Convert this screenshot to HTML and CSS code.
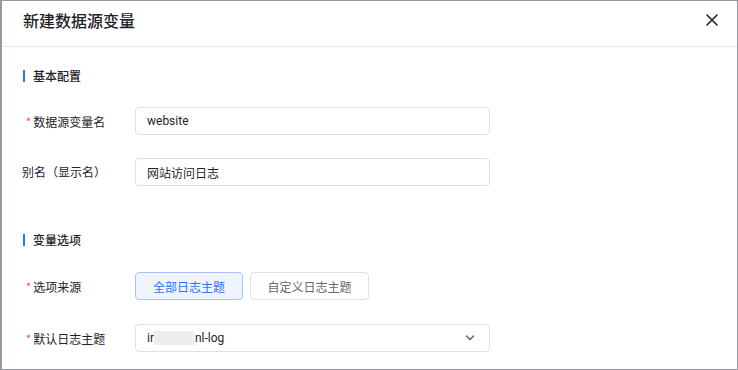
FILE: index.html
```html
<!DOCTYPE html>
<html lang="zh-CN">
<head>
    <meta charset="UTF-8">
    <title>新建数据源变量</title>
    <link rel="stylesheet" href="styles.css">
</head>
<body>
    <div class="dialog">
        <div class="dialog-header">
            <h1>新建数据源变量</h1>
            <span class="close">
                <svg width="14" height="14" viewBox="0 0 14 14"><path d="M2 2L12 12M12 2L2 12" stroke="#1f2329" stroke-width="1.6" stroke-linecap="round"/></svg>
            </span>
        </div>
        <div class="dialog-body">
            <div class="section-title">基本配置</div>
            <div class="form-row first">
                <label class="required">数据源变量名</label>
                <div class="input">website</div>
            </div>
            <div class="form-row">
                <label>别名（显示名）</label>
                <div class="input">网站访问日志</div>
            </div>

            <div class="section-title second">变量选项</div>
            <div class="form-row options">
                <label class="required">选项来源</label>
                <div class="btn-group">
                    <span class="btn active">全部日志主题</span>
                    <span class="btn">自定义日志主题</span>
                </div>
            </div>
            <div class="form-row wide">
                <label class="required">默认日志主题</label>
                <div class="input select">
                    <span>ir<span class="masked"></span>nl-log</span>
                    <svg width="10" height="6" viewBox="0 0 10 6"><path d="M1.5 1L5 4.5L8.5 1" fill="none" stroke="#646a73" stroke-width="1.6" stroke-linecap="round" stroke-linejoin="round"/></svg>
                </div>
            </div>
        </div>
    </div>
</body>
</html>
```

FILE: styles.css
```css
* {
    box-sizing: border-box;
}
body {
    margin: 0;
    font-family: "Noto Sans CJK SC", "Noto Sans", sans-serif;
    color: #1f2329;
    background: #fff;
}
.dialog {
    width: 738px;
    height: 370px;
    border: 1px solid #959aa2;
    border-left-width: 2px;
    background: #fff;
    overflow: hidden;
}
.dialog-header {
    height: 46px;
    padding: 0 18px 0 21px;
    display: flex;
    align-items: center;
    justify-content: space-between;
    border-bottom: 1px solid #e4e6eb;
}
.dialog-header h1 {
    margin: 0;
    font-size: 16px;
    font-weight: 500;
    line-height: 22px;
    margin-top: -7px;
}
.close {
    display: flex;
    margin-top: -7px;
}
.dialog-body {
    padding: 20px 20px 0 20px;
}
.section-title {
    position: relative;
    padding-left: 11px;
    font-size: 12px;
    font-weight: 500;
    line-height: 18px;
}
.section-title::before {
    content: "";
    position: absolute;
    left: 1px;
    top: 3px;
    width: 2px;
    height: 12px;
    background: #3370ff;
}
.section-title.second {
    margin-top: 45px;
}
.form-row {
    display: flex;
    align-items: center;
    margin-top: 23px;
}
.form-row.first {
    margin-top: 22px;
}
.form-row.options {
    margin-top: 23px;
}
.form-row.wide {
    margin-top: 24px;
}
.form-row label {
    width: 113px;
    font-size: 12px;
    line-height: 18px;
}
.form-row label.required::before {
    content: "*";
    color: #f54a45;
    font-size: 11px;
    vertical-align: 1px;
    margin: 0 2px 0 4px;
}
.input {
    width: 355px;
    height: 28px;
    border: 1px solid #dee0e3;
    border-radius: 4px;
    padding: 0 11px;
    display: flex;
    align-items: center;
    font-family: Roboto, "Noto Sans CJK SC", sans-serif;
    font-size: 12px;
    color: #1f2329;
}
.select {
    justify-content: space-between;
    padding-right: 14px;
}
.masked {
    display: inline-block;
    width: 40px;
    height: 14px;
    margin: 0 1px 0 0;
    vertical-align: -3px;
    background: #ececec;
}
.btn-group {
    display: flex;
    gap: 7px;
}
.btn {
    width: 119px;
    height: 28px;
    display: flex;
    align-items: center;
    justify-content: center;
    border: 1px solid #dee0e3;
    border-radius: 4px;
    font-size: 12px;
    color: #646a73;
    background: #fff;
}
.btn.active {
    width: 108px;
    color: #3370ff;
    background: #f0f4ff;
    border-color: #a9c1fb;
}
```
